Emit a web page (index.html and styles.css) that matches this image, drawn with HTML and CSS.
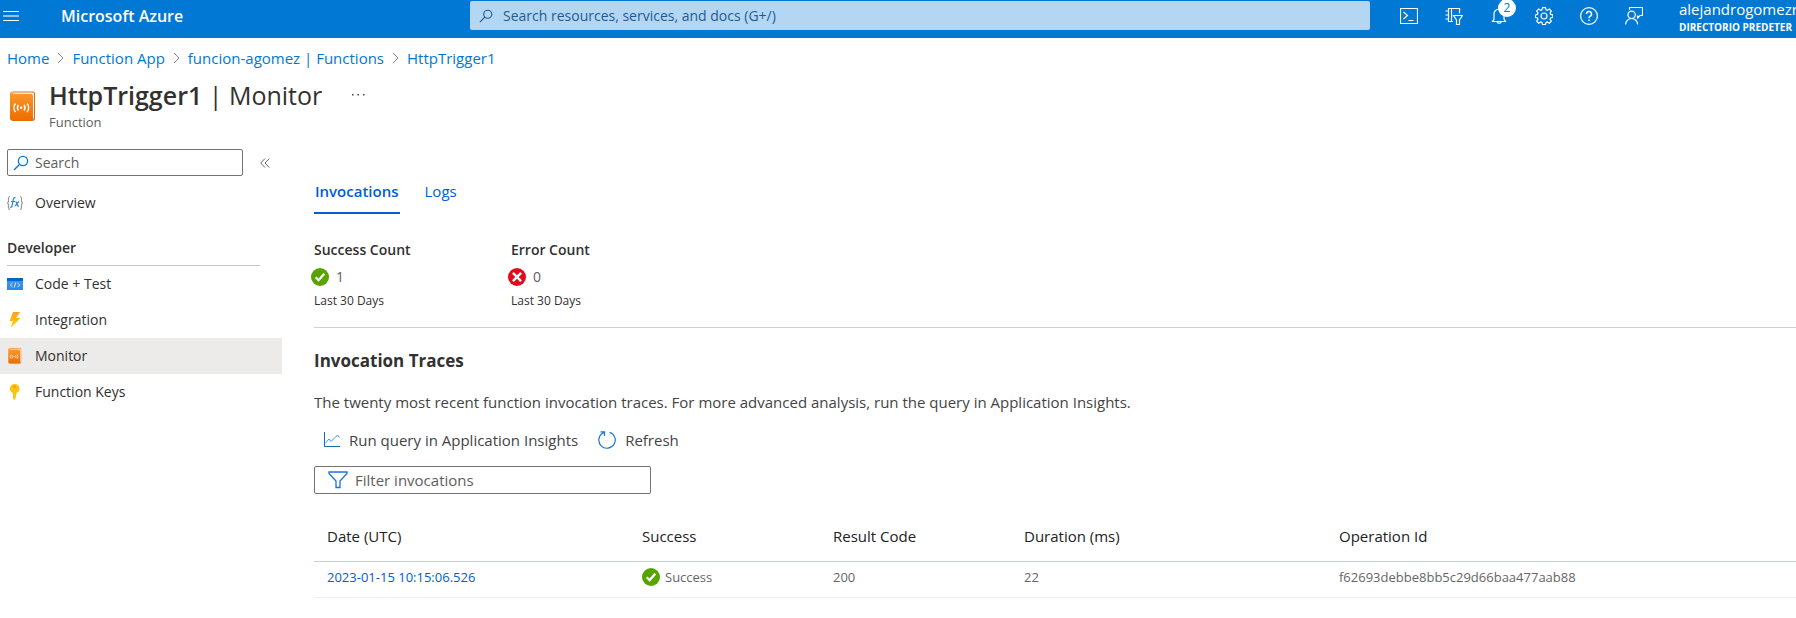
FILE: index.html
```html
<!DOCTYPE html>
<html lang="en">
<head>
<meta charset="utf-8">
<meta name="viewport" content="width=device-width, initial-scale=1">
<title>HttpTrigger1 | Monitor - Microsoft Azure</title>
<link rel="stylesheet" href="styles.css">
</head>
<body>
<svg class="defs" aria-hidden="true">
  <defs>
    <linearGradient id="orange" x1="0" y1="0" x2="0" y2="1"><stop offset="0" stop-color="#fb9a2c"/><stop offset="1" stop-color="#ee6c00"/></linearGradient>
    <linearGradient id="bolt" x1="0" y1="0" x2="0" y2="1"><stop offset="0" stop-color="#ff9f1c"/><stop offset="1" stop-color="#ffd400"/></linearGradient>
    <linearGradient id="blue" x1="0" y1="0" x2="0" y2="1"><stop offset="0" stop-color="#3f9bf0"/><stop offset="1" stop-color="#2f86ea"/></linearGradient>
    <symbol id="i-search" viewBox="0 0 16 16"><g fill="none" stroke="currentColor" stroke-width="1.3"><circle cx="10" cy="6" r="4.6"/><path d="M6.7 9.3 1 15"/></g></symbol>
    <symbol id="i-book" viewBox="0 0 26 31">
      <path d="M2.500.500h20A2.500 2.500 0 0 1 25 3V27a3 3 0 0 1-3 3H2z" fill="#e06a0a"/>
      <path d="M2.500 1.500h20A1.500 1.500 0 0 1 24 3V26a3 3 0 0 1-1.500 2.500z" fill="#fff"/>
      <path d="M1.500 2.800h19.500a2 2 0 0 1 2 2v22.700a2 2 0 0 1-2 2H2a2 2 0 0 1-2-2V2.500C0 1.500 1 .500 2.500.500z" fill="url(#orange)"/>
      <g fill="none" stroke="#fff" stroke-width="1.500"><path d="M5.500 12.500a6.500 6.500 0 0 0 0 8.500M8.500 14a4.500 4.500 0 0 0 0 5.500M17 12.500a6.500 6.500 0 0 1 0 8.500M14 14a4.500 4.500 0 0 1 0 5.500"/></g>
      <circle cx="11.200" cy="16.700" r="1.200" fill="#fff"/>
    </symbol>
    <symbol id="i-ok" viewBox="0 0 18 18"><circle cx="9" cy="9" r="9" fill="#57a300"/><path d="M4.700 9.300 7.600 12.200 13.300 5.800" fill="none" stroke="#fff" stroke-width="2.300"/></symbol>
    <symbol id="i-bad" viewBox="0 0 18 18"><circle cx="9" cy="9" r="9" fill="#e00b1c"/><path d="M4.900 4.900 13.100 13.100M13.100 4.900 4.900 13.100" fill="none" stroke="#fff" stroke-width="2.400"/></symbol>
  </defs>
</svg>

<header class="topbar">
  <button class="menu" aria-label="Show portal menu"><svg width="16" height="12" viewBox="0 0 16 12"><path d="M0 1.500h16M0 10.500h16" stroke="#fff"/><path d="M0 6h16" stroke="#8cc4f0" stroke-width="2"/></svg></button>
  <a class="brand" href="#">Microsoft Azure</a>
  <label class="global-search">
    <svg width="14" height="14"><use href="#i-search"/></svg>
    <input type="text" aria-label="Search resources, services, and docs" placeholder="Search resources, services, and docs (G+/)">
  </label>
  <nav class="tools" aria-label="Tools">
    <button aria-label="Cloud Shell"><svg width="18" height="16" viewBox="0 0 18 16"><path d="M.5.500h17v15H.500zM3.500 4l4 3.500-4 3.500M8.500 12.500h5" /></svg></button>
    <button aria-label="Directories and subscriptions"><svg width="18" height="18" viewBox="0 0 18 18"><path d="M8 14.500H3.500v-13h11v5M6.500 1.500v13M.500 4h3M.500 8h3M.500 12h3M8.500 8.500h9l-3 4.500v4.500h-3V13z"/></svg></button>
    <button class="bell" aria-label="Notifications"><svg width="16" height="18" viewBox="0 0 16 18"><path d="M1.500 14.500h13L13 12V7a5 5 0 0 0-10 0v5zM6 14.500a2.200 2.200 0 0 0 4.300 0"/></svg><span class="badge">2</span></button>
    <button aria-label="Settings"><svg width="18" height="18" viewBox="0 0 18 18"><path d="M7.500.600h3l.5 2.200 1.300.6 2-1.300 2 2-1.200 2 .5 1.300 2.200.5v2.500l-2.200.5-.5 1.400 1.200 1.900-2 2-2-1.200-1.300.5-.5 2.100h-3L7 15.500 5.700 15l-2 1.200-2-2L3 12.300l-.6-1.400-2-.5V7.900l2-.5L3 6.100l-1.300-2 2-2 2 1.300L7 2.800z"/><circle cx="9" cy="9" r="3"/></svg></button>
    <button aria-label="Help"><svg width="18" height="18" viewBox="0 0 18 18"><circle cx="9" cy="9" r="8.400"/><path d="M6.500 7a2.500 2.500 0 1 1 3.700 2.200C9.300 9.800 9 10.200 9 11.300M9 12.500v1.500" stroke-width="1.500"/></svg></button>
    <button aria-label="Feedback"><svg width="18" height="18" viewBox="0 0 18 18"><path d="M4.500 3V.500h13v8H15l-2.500 2.500V8.500M.600 17.500a6 6 0 0 1 12 0"/><circle cx="6.600" cy="7.800" r="3.700"/></svg></button>
  </nav>
  <button class="account"><span class="account-name">alejandrogomezr</span><span class="account-dir">DIRECTORIO PREDETER</span></button>
</header>

<nav class="crumbs" aria-label="Breadcrumb">
  <a href="#">Home</a><svg width="7" height="12" viewBox="0 0 7 12"><path d="M1 1l5 5-5 5"/></svg>
  <a href="#">Function App</a><svg width="7" height="12" viewBox="0 0 7 12"><path d="M1 1l5 5-5 5"/></svg>
  <a href="#">funcion-agomez | Functions</a><svg width="7" height="12" viewBox="0 0 7 12"><path d="M1 1l5 5-5 5"/></svg>
  <a href="#">HttpTrigger1</a>
</nav>

<div class="blade-head">
  <svg width="26" height="31"><use href="#i-book"/></svg>
  <div class="titles">
    <div class="title-row"><h1><strong>HttpTrigger1</strong> | Monitor</h1><button class="more" aria-label="More"><svg width="14" height="2" viewBox="0 0 14 2"><path d="M0 0h1.500v1.500H0zM5.500 0H7v1.500H5.500zM11 0h1.500v1.500H11z" fill="#444"/></svg></button></div>
    <p class="subtitle">Function</p>
  </div>
</div>

<div class="blade">
  <aside class="sidebar">
    <div class="side-search-row">
      <label class="side-search"><svg width="16" height="16"><use href="#i-search"/></svg><input type="text" aria-label="Search" placeholder="Search"></label>
      <button class="collapse" aria-label="Collapse"><svg width="10" height="10" viewBox="0 0 10 10"><path d="M5 .500.700 5 5 9.500M9.300.500 5 5l4.300 4.500" fill="none" stroke="#666"/></svg></button>
    </div>
    <a class="side-item" href="#">
      <svg width="16" height="16" viewBox="0 0 16 16" fill="none"><path d="M3 1.500c-1.500 0-1.500.5-1.500 2v3L.500 8l1 1.500v3c0 1.500 0 2 1.500 2M13 1.500c1.500 0 1.500.5 1.500 2v3l1 1.500-1 1.500v3c0 1.500 0 2-1.500 2" stroke="#999" stroke-width="1.200"/><path d="M8.500 3C7 2 6.400 3.500 6 6l-1 5c-.3 1.200-1 1.500-2 1M4 6.500h4M8.500 7c1.500-.8 1.500 5 3.500 4M12 6.700c-1.200 0-3 4.300-4.300 4.300" stroke="#2a83dc" stroke-width="1.200"/></svg>
      Overview</a>
    <h2 class="side-group">Developer</h2>
    <a class="side-item" href="#"><svg width="16" height="16" viewBox="0 0 16 16"><path d="M0 2h16v12H0z" fill="url(#blue)"/><path d="M0 2h16v3H0z" fill="#0067c5"/><path d="M5.500 7 3.200 9l2.300 2M10.500 7l2.300 2-2.300 2M8.800 6.500 7.200 11.500" fill="none" stroke="#d5e9fb"/></svg>Code + Test</a>
    <a class="side-item" href="#"><svg width="16" height="16" viewBox="0 0 16 16"><path d="M6 0h7L9 6h4.500L3.500 16l2.500-7H2.500z" fill="url(#bolt)"/></svg>Integration</a>
    <a class="side-item selected" href="#" aria-current="page"><svg width="16" height="16"><use href="#i-book"/></svg>Monitor</a>
    <a class="side-item" href="#"><svg width="16" height="16" viewBox="0 0 16 16"><path d="M7.500 0a5 4.700 0 0 1 2 9v1.500l-1 1 1 1-1 1V15l-1 1L6 14.500V9a5 4.700 0 0 1 1.500-9z" fill="#fcc40e"/><circle cx="7.500" cy="2.700" r="1.200" fill="#f59b00"/></svg>Function Keys</a>
  </aside>

  <main class="content">
    <div class="tabs" role="tablist">
      <button class="tab active" role="tab" aria-selected="true">Invocations</button>
      <button class="tab" role="tab" aria-selected="false">Logs</button>
    </div>
    <div class="counts">
      <section class="count"><h3>Success Count</h3><p class="value"><svg width="18" height="18"><use href="#i-ok"/></svg>1</p><p class="period">Last 30 Days</p></section>
      <section class="count"><h3>Error Count</h3><p class="value"><svg width="18" height="18"><use href="#i-bad"/></svg>0</p><p class="period">Last 30 Days</p></section>
    </div>
    <h2 class="section-title">Invocation Traces</h2>
    <p class="lead">The twenty most recent function invocation traces. For more advanced analysis, run the query in Application Insights.</p>
    <div class="commands">
      <button><svg width="16" height="16" viewBox="0 0 16 16" fill="none" stroke="#0f6cbd"><path d="M.5 0v14.500H16"/><path d="M1 11.500 5 7l2 2.500 6.500-6.500L15.500 5.500" stroke="#4a97dd"/></svg>Run query in Application Insights</button>
      <button><svg width="18" height="18" viewBox="0 0 18 18" fill="none" stroke="#1b77c9" stroke-width="1.200"><path d="M11.500 1.200A8.200 8.200 0 1 1 4.800 2L6.500 1M2.500.800h4V5"/></svg>Refresh</button>
    </div>
    <label class="filter"><svg width="20" height="18" viewBox="0 0 20 18"><path d="M1 1h18v1.500L12 10v6.500H8V10L1 2.500z" fill="none" stroke="#1f6fe0" stroke-width="1.300"/></svg><input type="text" aria-label="Filter invocations" placeholder="Filter invocations"></label>
    <table class="traces">
      <colgroup><col class="wide"><col class="narrow"><col class="narrow"><col class="wide"><col></colgroup>
      <thead><tr><th scope="col">Date (UTC)</th><th scope="col">Success</th><th scope="col">Result Code</th><th scope="col">Duration (ms)</th><th scope="col">Operation Id</th></tr></thead>
      <tbody><tr><td><a href="#">2023-01-15 10:15:06.526</a></td><td><span class="status"><svg width="18" height="18"><use href="#i-ok"/></svg>Success</span></td><td>200</td><td>22</td><td>f62693debbe8bb5c29d66baa477aab88</td></tr></tbody>
    </table>
  </main>
</div>
</body>
</html>
```
FILE: styles.css
```css
* { box-sizing: border-box; }
body {
  margin: 0;
  overflow-x: hidden;
  background: #fff;
  color: #323130;
  font-family: "Open Sans", "Noto Sans", sans-serif;
  font-size: 14px;
  line-height: 20px;
}
h1, h2, h3, p { margin: 0; }
a { color: #0078d4; text-decoration: none; }
button { padding: 0; border: 0; background: none; color: inherit; font: inherit; cursor: pointer; }
input { min-width: 0; flex: 1; padding: 0; border: 0; outline: 0; background: none; color: inherit; font: inherit; }
svg { display: block; flex: none; }
.defs { position: absolute; width: 0; height: 0; }

.topbar { display: flex; align-items: flex-start; height: 38px; overflow: hidden; background: #0078d4; color: #fff; }
.menu { padding: 10px 3px; }
.brand { width: 409px; margin-left: 39px; color: #fff; font-size: 16px; font-weight: 600; line-height: 32px; }
.global-search { display: flex; flex: 1; align-items: center; gap: 10px; height: 29px; margin-top: 1px; padding: 0 9px; border-radius: 2px; background: #b3d7f2; color: #1f5b93; }
.global-search input::placeholder { color: #1f5b93; opacity: 1; }
.tools { display: flex; padding-left: 16px; }
.tools button { display: flex; position: relative; width: 45px; height: 32px; align-items: center; justify-content: center; }
.tools svg { fill: none; stroke: #fff; stroke-width: 1.2; }
.badge { position: absolute; top: -1px; left: 22px; width: 18px; height: 18px; border-radius: 9px; background: #fff; color: #0078d4; font-size: 12px; line-height: 17px; }
.account { width: 117px; margin-left: 23px; text-align: left; white-space: nowrap; }
.account-name, .account-dir { display: block; }
.account-name { font-size: 15px; line-height: 19px; }
.account-dir { font-size: 10px; font-weight: 700; line-height: 16px; }

.crumbs { display: flex; align-items: center; gap: 8px; height: 40px; padding: 0 7px; font-size: 15px; }
.crumbs svg { fill: none; stroke: #8a8886; }

.blade-head { display: flex; align-items: center; gap: 13px; height: 56px; padding-left: 10px; }
.title-row { display: flex; align-items: center; gap: 30px; }
h1 { font-size: 25px; font-weight: 400; line-height: 32px; }
h1 strong { font-weight: 600; }
.titles { padding-bottom: 1px; }
.subtitle { color: #605e5c; font-size: 13px; line-height: 22px; }

.blade { display: flex; }
.sidebar { width: 282px; padding-top: 15px; }
.side-search-row { display: flex; align-items: center; gap: 17px; padding-left: 7px; }
.side-search { display: flex; align-items: center; gap: 6px; width: 236px; height: 27px; padding: 0 5px; border: 1px solid #75736f; border-radius: 2px; }
.side-search svg { color: #0078d4; }
.side-search input::placeholder { color: #605e5c; opacity: 1; }
.side-item { display: flex; align-items: center; gap: 12px; height: 36px; padding-left: 7px; color: #323130; }
.side-search-row + .side-item { margin-top: 9px; }
.side-item.selected { background: #edebe9; }
.side-group { margin: 17px 22px 0 7px; padding-bottom: 7px; border-bottom: 1px solid #c8c6c4; font-size: 14px; font-weight: 600; }

.content { flex: 1; min-width: 0; padding: 37px 0 0 32px; }
.tabs { display: flex; gap: 24px; color: #015cda; font-size: 15px; }
.tab { height: 43px; padding: 0 1px 2px; border-bottom: 2px solid transparent; }
.tab.active { border-color: #015cda; font-weight: 600; }
.counts { display: flex; padding: 26px 0 19px; border-bottom: 1px solid #d2d0ce; }
.count { width: 197px; }
.count h3 { font-size: 14px; font-weight: 600; }
.value { display: flex; align-items: center; gap: 7px; height: 34px; margin-left: -3px; color: #605e5c; font-size: 14px; }
.period { font-size: 12px; line-height: 14px; }
.section-title { margin-top: 23px; font-size: 17px; font-weight: 700; line-height: 20px; }
.lead { margin-top: 20px; color: #444; font-size: 15px; line-height: 22px; }
.commands { display: flex; gap: 20px; padding: 17px 0 16px 10px; color: #444; font-size: 15px; }
.commands button { display: flex; align-items: center; gap: 9px; }
.filter { display: flex; align-items: center; gap: 7px; width: 337px; height: 28px; padding: 0 13px; border: 1px solid #75736f; border-radius: 2px; font-size: 15px; }
.filter input::placeholder { color: #605e5c; opacity: 1; }
.traces { width: 100%; margin-top: 17px; border-collapse: collapse; table-layout: fixed; text-align: left; }
.traces col.wide { width: 315px; }
.traces col.narrow { width: 191px; }
.traces th { height: 50px; padding: 0 13px; border-bottom: 1px solid #c5d0de; color: #222; font-size: 15px; font-weight: 500; }
.traces td { height: 36px; padding: 0 13px 4px; border-bottom: 1px solid #f0f0f0; color: #666; font-size: 13px; }
.traces a { color: #015cda; }
.status { display: flex; align-items: center; gap: 5px; }
```
